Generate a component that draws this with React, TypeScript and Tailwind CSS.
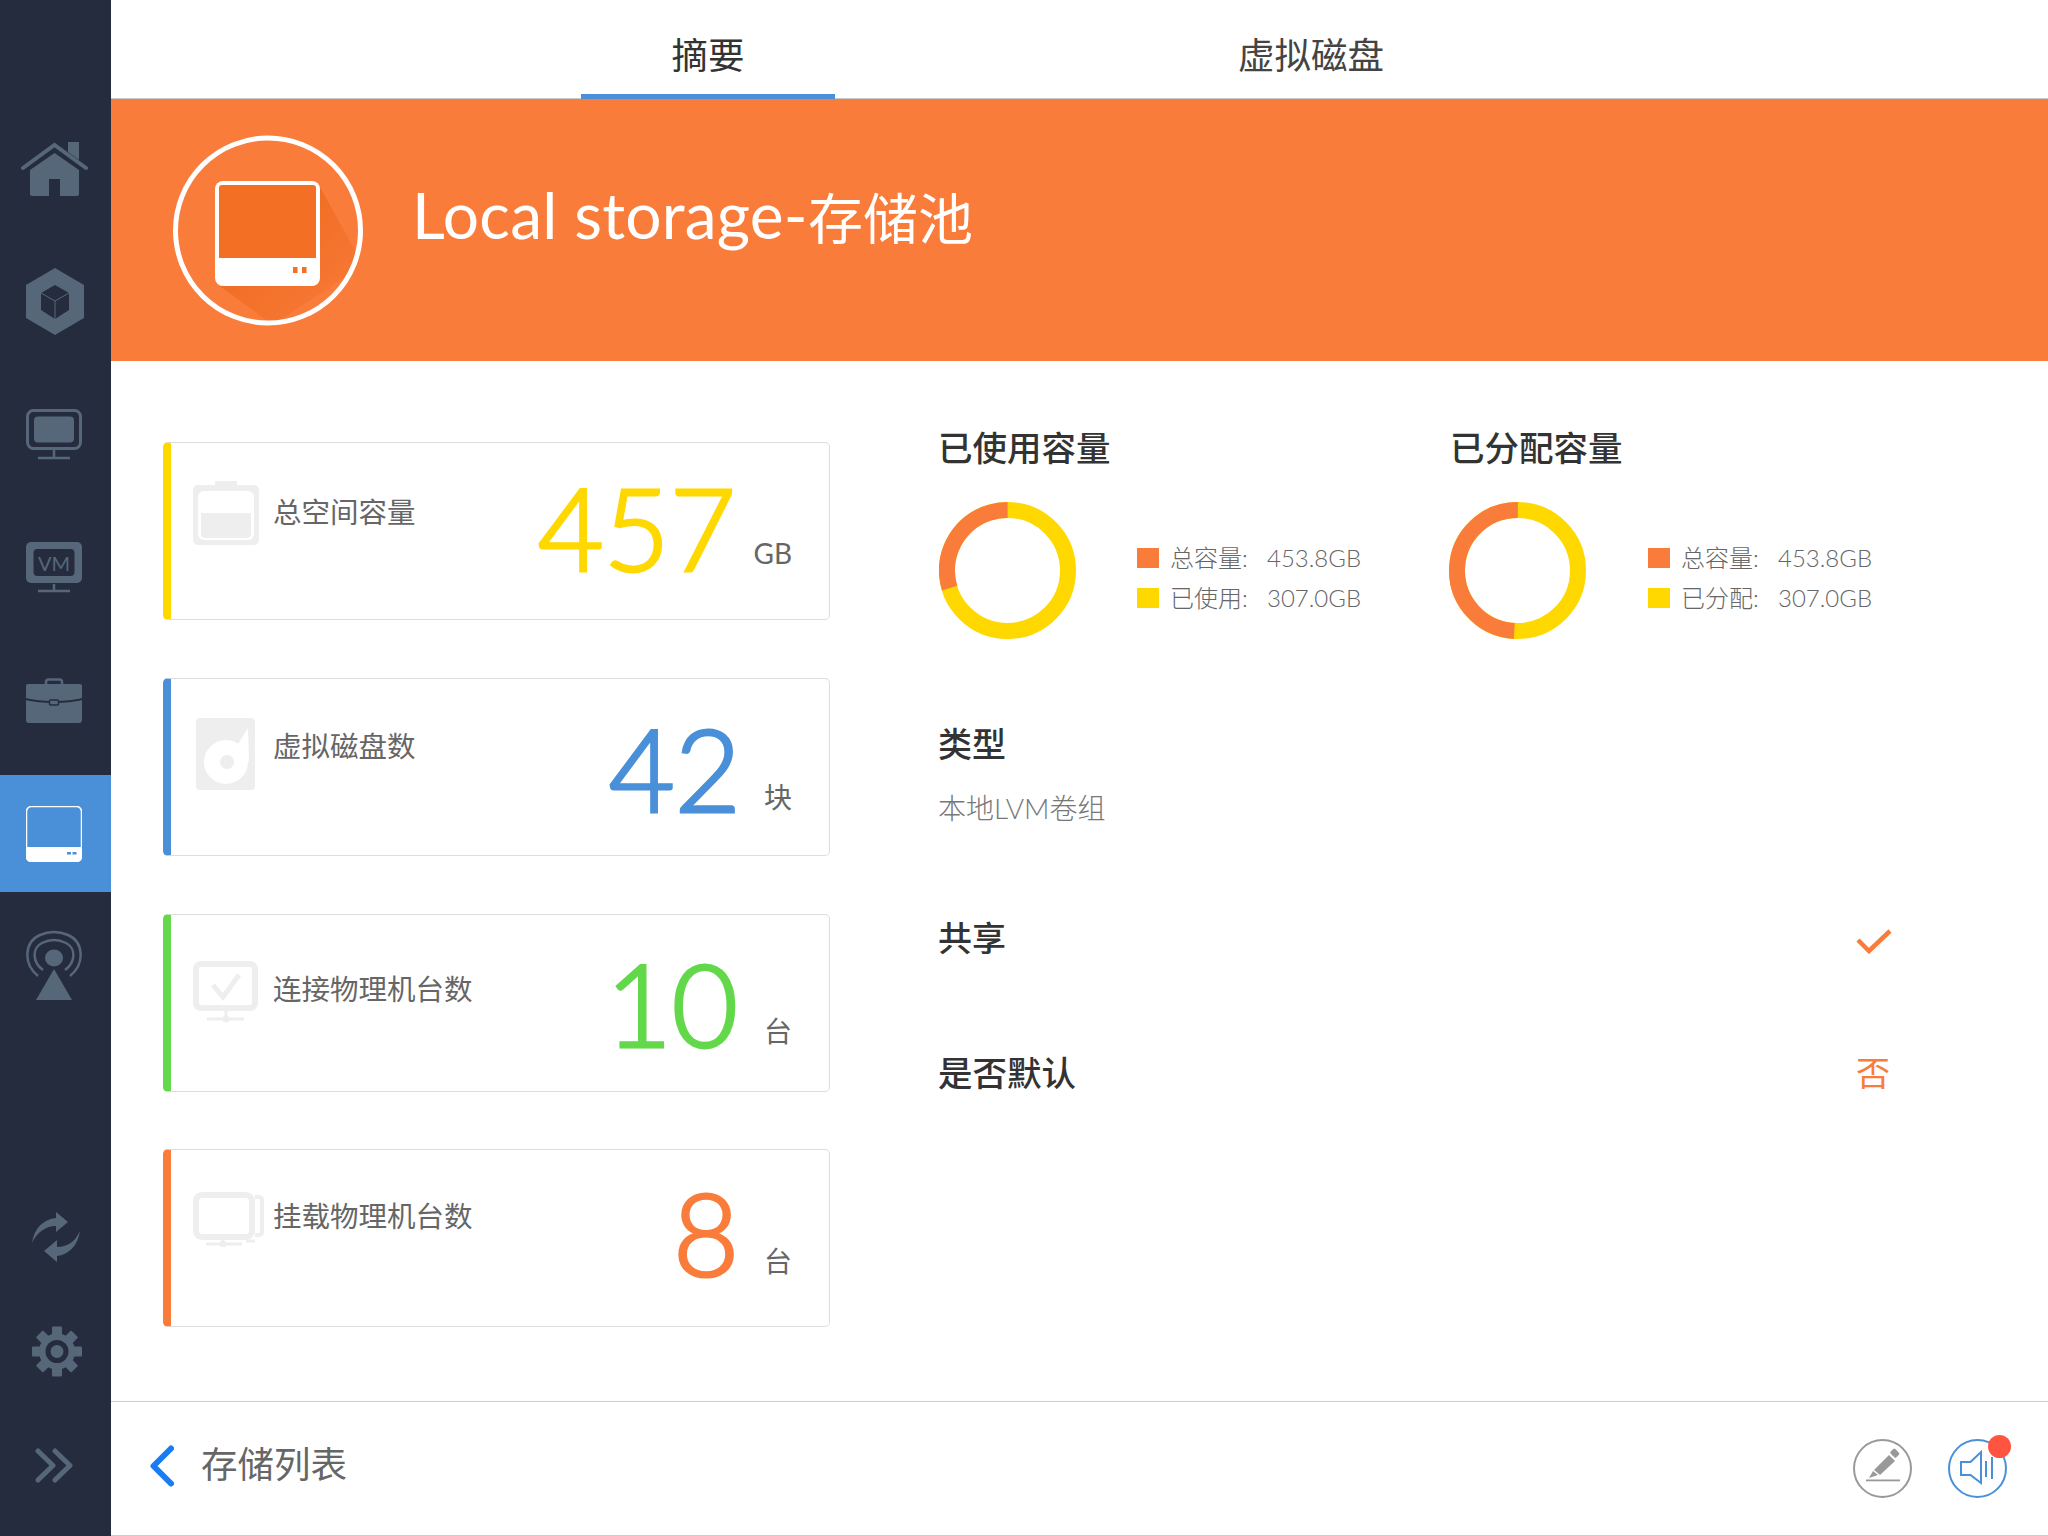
import type { ReactNode } from "react";

const nav = "#56677a";
const navBg = "#252c3e";

function HomeIcon() {
  return (
    <svg width="67" height="54" viewBox="0 0 67 54">
      <path d="M47 0h11v18l-11-8z" fill={nav} />
      <path d="M2 26 33.500 3 65 26" fill="none" stroke={nav} strokeWidth="4" strokeLinecap="round" />
      <path d="M9 28 33.500 11 58 28v24a2 2 0 0 1-2 2H39V37H28v17H11a2 2 0 0 1-2-2z" fill={nav} />
    </svg>
  );
}

function CubeIcon() {
  return (
    <svg width="58" height="67" viewBox="0 0 58 67">
      <path d="M29 0 58 17v33L29 67 0 50V17z" fill={nav} />
      <path d="M29 17l14 8v17l-14 9-14-9V25z" fill={navBg} />
      <path d="M15 25l14 8 14-8M29 33v18" fill="none" stroke={nav} strokeWidth="1" />
    </svg>
  );
}

function MonitorIcon() {
  return (
    <svg width="56" height="51" viewBox="0 0 56 51">
      <rect x="1.500" y="1.500" width="53" height="38" rx="6" fill="none" stroke={nav} strokeWidth="3" />
      <rect x="8" y="7.500" width="40" height="26" rx="4" fill={nav} />
      <path d="M28 41v7M12 49h32" stroke={nav} strokeWidth="2.500" />
    </svg>
  );
}

function VmIcon() {
  return (
    <svg width="56" height="51" viewBox="0 0 56 51">
      <rect x="0" y="0" width="56" height="41" rx="5" fill={nav} />
      <rect x="7.500" y="7" width="41" height="27" rx="4" fill={navBg} />
      <text x="28" y="29" textAnchor="middle" fontFamily="Lato, sans-serif" fontSize="20" fill={nav}>
        VM
      </text>
      <path d="M28 42v6M12 49h32" stroke={nav} strokeWidth="2.500" />
    </svg>
  );
}

function CaseIcon() {
  return (
    <svg width="56" height="45" viewBox="0 0 56 45">
      <path d="M20 6V4a2.500 2.500 0 0 1 2.500-2.500h11A2.500 2.500 0 0 1 36 4v2" fill="none" stroke={nav} strokeWidth="2.500" />
      <path d="M2 6h52a2 2 0 0 1 2 2v12c-14 4-42 4-56 0V8a2 2 0 0 1 2-2z" fill={nav} />
      <path d="M0 22c14 4 42 4 56 0v20a3 3 0 0 1-3 3H3a3 3 0 0 1-3-3z" fill={nav} />
      <rect x="23.500" y="22" width="9" height="5" rx="1" fill={nav} stroke={navBg} strokeWidth="1.500" />
    </svg>
  );
}

function ActiveDiskIcon() {
  return (
    <svg width="56" height="56" viewBox="0 0 56 56">
      <rect x="0.500" y="0.500" width="55" height="55" rx="5" fill="none" stroke="#fff" strokeWidth="1.500" />
      <path d="M0 41h56v10a5 5 0 0 1-5 5H5a5 5 0 0 1-5-5z" fill="#fff" />
      <rect x="41" y="46" width="4" height="2.500" fill="#4a90d9" />
      <rect x="46.500" y="46" width="4" height="2.500" fill="#4a90d9" />
    </svg>
  );
}

function AntennaIcon() {
  return (
    <svg width="56" height="70" viewBox="0 0 56 70">
      <path d="M12 46C-3 34-2 12 14 5c9-4 19-4 28 0 16 7 17 29 2 41" fill="none" stroke={nav} strokeWidth="2.500" />
      <path d="M17 40C6 32 6 18 16 13c8-4 16-4 24 0 10 5 10 19-1 27" fill="none" stroke={nav} strokeWidth="2.500" />
      <ellipse cx="28" cy="28" rx="9" ry="8.500" fill={nav} />
      <path d="M28 39 46 70H10z" fill={nav} />
    </svg>
  );
}

function SyncIcon() {
  return (
    <svg width="48" height="50" viewBox="0 0 48 50" fill={nav}>
      <path d="M0 31C2 16 12 7 24 6V0l12 10-12 10v-6C14 14 5 20 0 31z" />
      <path d="M48 19C46 34 36 43 25 44v6L12 39l13-11v7c10 0 18-5 23-16z" />
    </svg>
  );
}

function GearIcon() {
  const angles = [0, 45, 90, 135, 180, 225, 270, 315];
  return (
    <svg width="50" height="51" viewBox="0 0 50 51">
      {angles.map((a) => (
        <rect key={a} x="20" y="0.500" width="10" height="12" rx="1" fill={nav} transform={`rotate(${a} 25 25.500)`} />
      ))}
      <circle cx="25" cy="25.500" r="18" fill={nav} />
      <circle cx="25" cy="25.500" r="11.500" fill={navBg} />
      <circle cx="25" cy="25.500" r="6.500" fill={nav} />
    </svg>
  );
}

function ChevronsIcon() {
  return (
    <svg width="38" height="35" viewBox="0 0 38 35" fill="none" stroke={nav} strokeWidth="5" strokeLinecap="round" strokeLinejoin="round">
      <path d="M3 3l15 14.500L3 32" />
      <path d="M20 3l15 14.500L20 32" />
    </svg>
  );
}

function StorageBadge() {
  return (
    <svg width="190" height="191" viewBox="0 0 190 191">
      <defs>
        <linearGradient id="fade" x1="0.200" y1="0.200" x2="1" y2="1">
          <stop offset="0" stopColor="#ee6a1f" />
          <stop offset="1" stopColor="#fa7c3b" />
        </linearGradient>
        <clipPath id="ring">
          <circle cx="95" cy="95.500" r="92" />
        </clipPath>
      </defs>
      <path d="M147 52 190 130 100 190 48 152z" fill="url(#fade)" clipPath="url(#ring)" />
      <circle cx="95" cy="95.500" r="92.500" fill="none" stroke="#fff" strokeWidth="5" />
      <path d="M50 46h89a8 8 0 0 1 8 8v89a8 8 0 0 1-8 8H50a8 8 0 0 1-8-8V54a8 8 0 0 1 8-8z" fill="#fff" />
      <path d="M46 53a3 3 0 0 1 3-3h91a3 3 0 0 1 3 3v70H46V53z" fill="#f26f23" />
      <rect x="120" y="132" width="4.500" height="6" fill="#f26f23" />
      <rect x="129" y="132" width="4.500" height="6" fill="#f26f23" />
    </svg>
  );
}

function BatteryCard() {
  return (
    <svg width="66" height="64" viewBox="0 0 66 64">
      <rect x="22" y="0" width="22" height="6" rx="1" fill="#eeeeee" />
      <rect x="0" y="4" width="66" height="60" rx="5" fill="#eeeeee" />
      <rect x="5" y="10" width="56" height="49" rx="6" fill="#fff" />
      <path d="M8 32h50v21a4 4 0 0 1-4 4H12a4 4 0 0 1-4-4z" fill="#eeeeee" />
    </svg>
  );
}

function DiskCard() {
  return (
    <svg width="59" height="72" viewBox="0 0 59 72">
      <rect width="59" height="72" rx="4" fill="#eeeeee" />
      <circle cx="30" cy="44" r="22" fill="#fff" />
      <path d="M52 10 53 44 42 26z" fill="#fff" />
      <circle cx="31" cy="44" r="7" fill="#eeeeee" />
    </svg>
  );
}

function CheckMonitorCard() {
  return (
    <svg width="65" height="62" viewBox="0 0 65 62" fill="none" stroke="#eeeeee">
      <rect x="3" y="3" width="59" height="44" rx="5" strokeWidth="6" />
      <path d="M20 24l10 12 16-22" strokeWidth="5" />
      <path d="M33 50v9M14 58h37" strokeWidth="3" />
      <circle cx="33" cy="58" r="3.500" fill="#eeeeee" stroke="none" />
    </svg>
  );
}

function MountMonitorCard() {
  return (
    <svg width="71" height="55" viewBox="0 0 71 55" fill="none" stroke="#eeeeee">
      <rect x="3" y="3" width="56" height="42" rx="6" strokeWidth="6" />
      <path d="M62 5h4a3 3 0 0 1 3 3v32a3 3 0 0 1-3 3h-4" strokeWidth="4" />
      <path d="M30 47v7M13 52h36M53 49h9" strokeWidth="3" />
      <circle cx="30" cy="52" r="3.500" fill="#eeeeee" stroke="none" />
    </svg>
  );
}

function Donut({ from, to }: { from: number; to: number }) {
  // angles are degrees clockwise from 12 o'clock, the orange part lies between them
  const r = 60.5;
  const c = 2 * Math.PI * r;
  const len = ((to - from) / 360) * c;
  return (
    <svg width="137" height="137" viewBox="0 0 137 137" className="shrink-0">
      <circle cx="68.500" cy="68.500" r={r} fill="none" stroke="#ffd800" strokeWidth="16" />
      <circle
        cx="68.500"
        cy="68.500"
        r={r}
        fill="none"
        stroke="#fa7c3b"
        strokeWidth="16"
        strokeDasharray={`${len} ${c}`}
        transform={`rotate(${from - 90} 68.500 68.500)`}
      />
    </svg>
  );
}

function Legend({ label, k }: { label: string; k: string }) {
  return (
    <div className="mt-[13px] flex flex-col gap-[20px] font-light text-[24px] leading-[20px] text-[#666]">
      <div className="flex items-center">
        <span className="w-[22px] h-[20px] bg-[#fa7c3b] mr-[11px]" />
        <span className="w-[97px]">总容量:</span>
        <span>453.8GB</span>
      </div>
      <div className="flex items-center">
        <span className="w-[22px] h-[20px] bg-[#ffd800] mr-[11px]" />
        <span className="w-[97px]">{label}:</span>
        <span>{k}</span>
      </div>
    </div>
  );
}

type CardProps = {
  bar: string;
  color: string;
  icon: ReactNode;
  iconTop: string;
  labelTop: string;
  label: string;
  value: string;
  valueTop: string;
  unit: string;
  unitBox: string;
};

function StatCard({ bar, color, icon, iconTop, labelTop, label, value, valueTop, unit, unitBox }: CardProps) {
  return (
    <div className={`flex h-[178px] rounded-[5px] border border-l-[8px] border-[#dddddd] pl-[22px] pr-[37px] ${bar}`}>
      <div className={`w-[80px] shrink-0 ${iconTop}`}>{icon}</div>
      <div className={`text-[28.5px] leading-[40px] text-[#666] ${labelTop}`}>{label}</div>
      <div className={`ml-auto flex items-end h-fit ${valueTop}`}>
        <span className={`text-[114px] leading-[114px] font-light [-webkit-text-stroke:3px_currentColor] ${color}`}>{value}</span>
        <span className={`text-right text-[28px] leading-[36px] text-[#666] ${unitBox}`}>{unit}</span>
      </div>
    </div>
  );
}

const cards: CardProps[] = [
  {
    bar: "border-l-[#ffd800]",
    color: "text-[#ffd800]",
    icon: <BatteryCard />,
    iconTop: "mt-[38px]",
    labelTop: "mt-[49px]",
    label: "总空间容量",
    value: "457",
    valueTop: "mt-[27px]",
    unit: "GB",
    unitBox: "w-[56px] mb-[13px]",
  },
  {
    bar: "border-l-[#4a90d9]",
    color: "text-[#4a90d9]",
    icon: <DiskCard />,
    iconTop: "mt-[39px] ml-[3px] -mr-[3px]",
    labelTop: "mt-[47px]",
    label: "虚拟磁盘数",
    value: "42",
    valueTop: "mt-[32px]",
    unit: "块",
    unitBox: "w-[51px] mb-[10px]",
  },
  {
    bar: "border-l-[#62d84a]",
    color: "text-[#62d84a]",
    icon: <CheckMonitorCard />,
    iconTop: "mt-[46px]",
    labelTop: "mt-[54px]",
    label: "连接物理机台数",
    value: "10",
    valueTop: "mt-[31px]",
    unit: "台",
    unitBox: "w-[54px] mb-[11px]",
  },
  {
    bar: "border-l-[#fa7c3b]",
    color: "text-[#fa7c3b]",
    icon: <MountMonitorCard />,
    iconTop: "mt-[42px]",
    labelTop: "mt-[46px]",
    label: "挂载物理机台数",
    value: "8",
    valueTop: "mt-[25px]",
    unit: "台",
    unitBox: "w-[53px] mb-[10px]",
  },
];

const navTop = [
  <HomeIcon key="home" />,
  <CubeIcon key="cube" />,
  <MonitorIcon key="monitor" />,
  <VmIcon key="vm" />,
  <CaseIcon key="case" />,
];

export default function App() {
  return (
    <div className="flex h-[1536px] w-[2048px] overflow-hidden bg-white font-['Lato','Noto_Sans_CJK_SC',sans-serif]">
      {/* Sidebar */}
      <aside className="flex w-[111px] shrink-0 flex-col bg-[#252c3e] pt-[102px] pb-[14px]">
        {navTop.map((icon) => (
          <div key={icon.key} className={`flex h-[133px] items-center ${icon.key === "home" ? "pl-[21px]" : "pl-[26px]"}`}>
            {icon}
          </div>
        ))}
        <div className="flex h-[133px] items-center">
          <div className="flex h-[117px] w-full items-center bg-[#4a90d9] pl-[26px]">
            <ActiveDiskIcon />
          </div>
        </div>
        <div className="flex h-[133px] items-center pb-[3px] pl-[26px]">
          <AntennaIcon />
        </div>
        <div className="flex-1" />
        <div className="flex h-[114px] items-center pl-[32px]">
          <SyncIcon />
        </div>
        <div className="flex h-[114px] items-center pl-[32px]">
          <GearIcon />
        </div>
        <div className="flex h-[114px] items-center pl-[35px]">
          <ChevronsIcon />
        </div>
      </aside>

      <main className="flex min-w-0 flex-1 flex-col">
        {/* Tabs */}
        <div className="flex h-[99px] shrink-0 border-b border-[#cccccc] pl-[470px]">
          <div className="flex h-[99px] w-[254px] items-center justify-center border-b-[5px] border-[#4a90d9] pt-[16px] text-[36.5px] text-[#333]">
            摘要
          </div>
          <div className="ml-[349px] flex h-[99px] w-[254px] items-center justify-center pt-[12px] text-[36.5px] text-[#444]">
            虚拟磁盘
          </div>
        </div>

        {/* Banner */}
        <div className="flex h-[262px] shrink-0 items-center bg-[#fa7c3b] pl-[62px]">
          <StorageBadge />
          <h1 className="ml-[49px] pb-[30px] text-[64px] font-normal tracking-[0.25px] text-white">
            Local storage-<span className="text-[55px] tracking-normal">存储池</span>
          </h1>
        </div>

        {/* Body */}
        <div className="flex min-h-0 flex-1 pl-[52px]">
          <div className="flex w-[667px] shrink-0 flex-col gap-[57.75px] pt-[81px]">
            {cards.map((c) => (
              <StatCard key={c.label} {...c} />
            ))}
          </div>

          <div className="ml-[108px] flex w-[956px] flex-col pt-[63px]">
            <div className="flex">
              <div className="w-[512px]">
                <h2 className="text-[34.5px] leading-[48px] font-medium text-[#333]">已使用容量</h2>
                <div className="mt-[30px] ml-[1px] flex items-start">
                  <Donut from={253} to={360} />
                  <div className="ml-[61px] pt-[33px]">
                    <Legend label="已使用" k="307.0GB" />
                  </div>
                </div>
              </div>
              <div>
                <h2 className="text-[34.5px] leading-[48px] font-medium text-[#333]">已分配容量</h2>
                <div className="mt-[30px] -ml-[1px] flex items-start">
                  <Donut from={183} to={360} />
                  <div className="ml-[62px] pt-[33px]">
                    <Legend label="已分配" k="307.0GB" />
                  </div>
                </div>
              </div>
            </div>

            <h2 className="mt-[81px] text-[34px] leading-[48px] font-medium text-[#333]">类型</h2>
            <p className="mt-[20px] text-[28px] leading-[40px] font-light text-[#777]">本地LVM卷组</p>

            <div className="mt-[86px] flex items-center justify-between pr-[2px]">
              <h2 className="text-[34px] leading-[48px] font-medium text-[#333]">共享</h2>
              <svg width="36" height="26" viewBox="0 0 36 26" fill="none" stroke="#fa7c3b" strokeWidth="4.500" className="mt-[5px]">
                <path d="M2 12l11 11L34 3" />
              </svg>
            </div>
            <div className="mt-[87px] flex items-center justify-between pr-[4px]">
              <h2 className="text-[34.5px] leading-[48px] font-medium text-[#333]">是否默认</h2>
              <span className="text-[34px] leading-[48px] text-[#fa7c3b]">否</span>
            </div>
          </div>
        </div>

        {/* Footer */}
        <footer className="flex h-[135px] shrink-0 items-center border-y border-[#cccccc] pl-[39px] pr-[41px]">
          <svg width="24" height="42" viewBox="0 0 24 42" fill="none" stroke="#1a7cf5" strokeWidth="6" strokeLinecap="round" strokeLinejoin="round" className="mb-[6px]">
            <path d="M21 3.500 3.500 21 21 38.500" />
          </svg>
          <span className="ml-[27px] pb-[8px] text-[36.5px] text-[#666]">存储列表</span>

          <div className="ml-auto flex h-[59px] w-[59px] items-center justify-center rounded-full border-2 border-[#999]">
            <svg width="55" height="55" viewBox="2 2 55 55" fill="#999">
              <path d="M16 39l4-7 5 4z" />
              <path d="M21 31 36 16l6 6-15 14z" />
              <rect x="38" y="11" width="8" height="6.500" rx="1.500" transform="rotate(45 42 14)" />
              <rect x="13" y="40.500" width="34" height="1.800" />
            </svg>
          </div>
          <div className="relative ml-[36px] flex h-[59px] w-[59px] items-center justify-center rounded-full border-2 border-[#4a90d9]">
            <svg width="55" height="55" viewBox="2 2 55 55" fill="none" stroke="#4a90d9" strokeWidth="2">
              <path d="M13 23h9.500L33 13v31L22.500 36H13z" />
              <path d="M38 22v16M44 18v22" />
            </svg>
            <span className="absolute -top-[6px] -right-[6px] h-[23px] w-[23px] rounded-full bg-[#ff5540]" />
          </div>
        </footer>
      </main>
    </div>
  );
}
